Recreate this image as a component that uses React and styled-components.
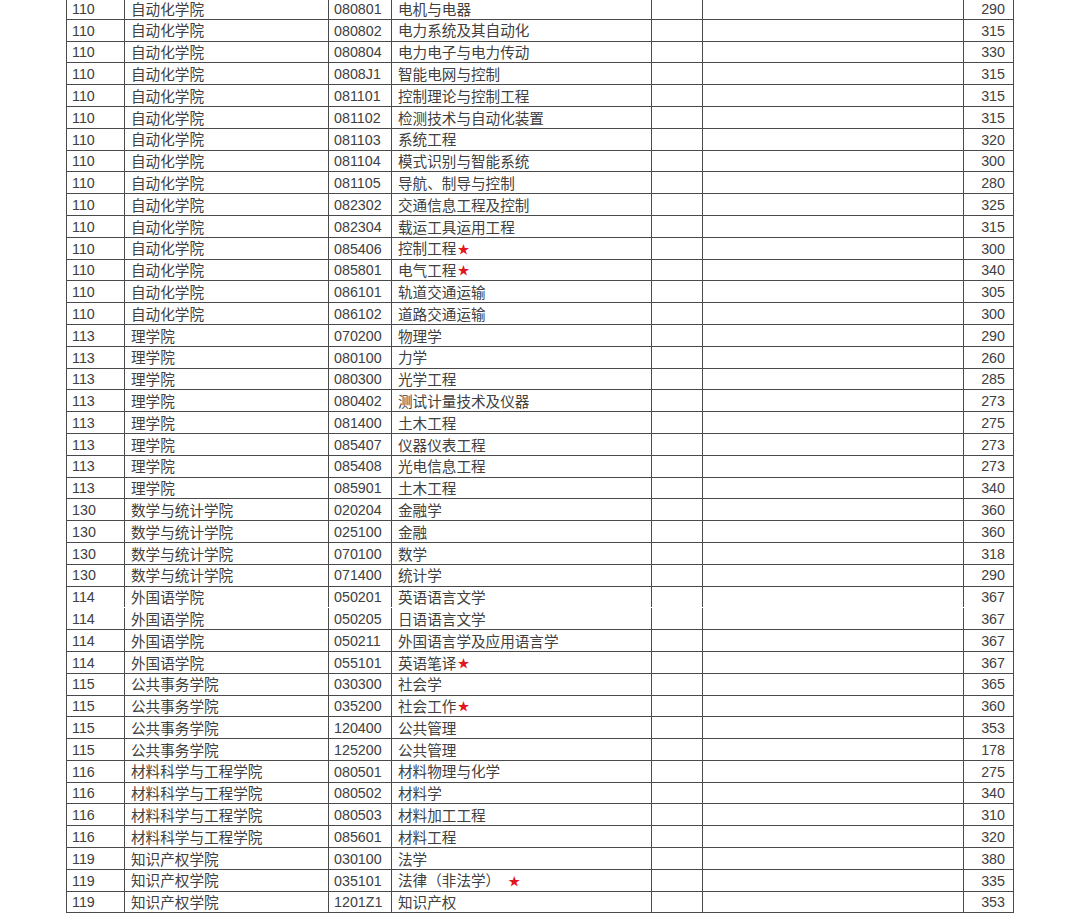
import React from "react";
import styled, { createGlobalStyle } from "styled-components";

const Global = createGlobalStyle`
  html, body { margin: 0; padding: 0; background: #fff; }
  body { overflow: hidden; }
`;

const Page = styled.div`
  width: 1080px;
  height: 917px;
  overflow: hidden;
  background: #fff;
  padding-left: 66px;
  box-sizing: border-box;
`;

const Table = styled.div`
  margin-top: -2px;
  width: 946px;
  border-left: 1px solid #4a4a4a;
  border-right: 1px solid #4a4a4a;
  font-family: "Liberation Sans", "Noto Sans CJK SC", sans-serif;
  font-size: 14.3px;
  color: #404040;
`;

const Row = styled.div`
  display: grid;
  grid-template-columns: 57px 204px 63px 260px 51px 261px 49px;
  height: 21.81px;
  box-sizing: border-box;
  border-bottom: 1px solid ${(p) => (p.$open ? "transparent" : "#4a4a4a")};
`;

const Cell = styled.div`
  display: flex;
  align-items: center;
  justify-content: ${(p) => (p.$right ? "flex-end" : "flex-start")};
  padding: ${(p) => (p.$right ? "1px 7px 0 0" : "1px 0 0 5px")};
  border-left: ${(p) => (p.$first ? "none" : "1px solid #4a4a4a")};
  white-space: nowrap;
  overflow: hidden;
  line-height: 1;
`;

const TextCell = styled(Cell)`
  font-family: "Noto Sans CJK SC", sans-serif;
  font-size: 14.6px;
  padding-left: 6px;
`;

const Star = styled.span`
  color: #e3141b;
  font-size: 12px;
  margin-left: ${(p) => (p.$gap ? "8px" : "1px")};
`;

const rows = [
  ["110", "自动化学院", "080801", "电机与电器", "290"],
  ["110", "自动化学院", "080802", "电力系统及其自动化", "315"],
  ["110", "自动化学院", "080804", "电力电子与电力传动", "330"],
  ["110", "自动化学院", "0808J1", "智能电网与控制", "315"],
  ["110", "自动化学院", "081101", "控制理论与控制工程", "315"],
  ["110", "自动化学院", "081102", "检测技术与自动化装置", "315"],
  ["110", "自动化学院", "081103", "系统工程", "320"],
  ["110", "自动化学院", "081104", "模式识别与智能系统", "300"],
  ["110", "自动化学院", "081105", "导航、制导与控制", "280"],
  ["110", "自动化学院", "082302", "交通信息工程及控制", "325"],
  ["110", "自动化学院", "082304", "载运工具运用工程", "315"],
  ["110", "自动化学院", "085406", "控制工程", "300", "star"],
  ["110", "自动化学院", "085801", "电气工程", "340", "star"],
  ["110", "自动化学院", "086101", "轨道交通运输", "305"],
  ["110", "自动化学院", "086102", "道路交通运输", "300"],
  ["113", "理学院", "070200", "物理学", "290"],
  ["113", "理学院", "080100", "力学", "260"],
  ["113", "理学院", "080300", "光学工程", "285"],
  ["113", "理学院", "080402", "测试计量技术及仪器", "273"],
  ["113", "理学院", "081400", "土木工程", "275"],
  ["113", "理学院", "085407", "仪器仪表工程", "273"],
  ["113", "理学院", "085408", "光电信息工程", "273"],
  ["113", "理学院", "085901", "土木工程", "340"],
  ["130", "数学与统计学院", "020204", "金融学", "360"],
  ["130", "数学与统计学院", "025100", "金融", "360"],
  ["130", "数学与统计学院", "070100", "数学", "318"],
  ["130", "数学与统计学院", "071400", "统计学", "290"],
  ["114", "外国语学院", "050201", "英语语言文学", "367", null, true],
  ["114", "外国语学院", "050205", "日语语言文学", "367"],
  ["114", "外国语学院", "050211", "外国语言学及应用语言学", "367"],
  ["114", "外国语学院", "055101", "英语笔译", "367", "star"],
  ["115", "公共事务学院", "030300", "社会学", "365"],
  ["115", "公共事务学院", "035200", "社会工作", "360", "star"],
  ["115", "公共事务学院", "120400", "公共管理", "353"],
  ["115", "公共事务学院", "125200", "公共管理", "178"],
  ["116", "材料科学与工程学院", "080501", "材料物理与化学", "275"],
  ["116", "材料科学与工程学院", "080502", "材料学", "340"],
  ["116", "材料科学与工程学院", "080503", "材料加工工程", "310"],
  ["116", "材料科学与工程学院", "085601", "材料工程", "320"],
  ["119", "知识产权学院", "030100", "法学", "380"],
  ["119", "知识产权学院", "035101", "法律（非法学）", "335", "gap"],
  ["119", "知识产权学院", "1201Z1", "知识产权", "353"],
];

export default function App() {
  return (
    <Page>
      <Global />
      <Table>
        {rows.map(([no, school, code, name, score, star, open], i) => (
          <Row key={i} $open={open}>
            <Cell $first>{no}</Cell>
            <TextCell>{school}</TextCell>
            <Cell>{code}</Cell>
            <TextCell>
              {name}
              {star && <Star $gap={star === "gap"}>★</Star>}
            </TextCell>
            <Cell />
            <Cell />
            <Cell $right>{score}</Cell>
          </Row>
        ))}
      </Table>
    </Page>
  );
}
